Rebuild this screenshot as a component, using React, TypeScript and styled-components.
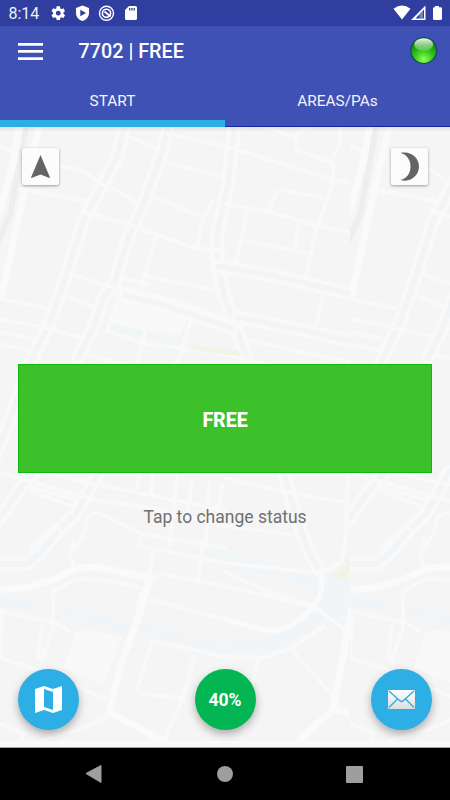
import React from "react";
import styled, { createGlobalStyle } from "styled-components";

const GlobalStyle = createGlobalStyle`
  * { box-sizing: border-box; }
  body { margin: 0; font-family: Roboto, "Noto Sans", sans-serif; background: #fafafa; }
  button { font: inherit; border: 0; padding: 0; margin: 0; color: inherit; }
  svg { display: block; }
`;

const Screen = styled.div`
  width: 450px;
  height: 800px;
  display: flex;
  flex-direction: column;
  overflow: hidden;
  background: #fafafa;
`;

const StatusBar = styled.div`
  height: 26px;
  flex: none;
  display: flex;
  align-items: center;
  justify-content: space-between;
  background: #303f9f;
  color: #fff;
`;

const Clock = styled.span`
  width: 42px;
  padding-left: 8.5px;
  font-size: 16px;
  line-height: 26px;
  padding-top: 1px;
  color: #eef0fa;
`;

const StatusGroup = styled.div`
  display: flex;
  align-items: center;
`;

const AppBar = styled.header`
  height: 50px;
  flex: none;
  display: flex;
  align-items: center;
  padding: 0 12px 0 18px;
  background: #3f51b5;
  color: #fff;
`;

const MenuButton = styled.button`
  width: 25px;
  height: 17px;
  background: none;
`;

const Title = styled.h1`
  flex: 1;
  margin: 0 0 0 35.5px;
  padding-top: 2px;
  font-size: 19.8px;
  font-weight: 500;
  line-height: 48px;
`;

const TabRow = styled.nav`
  height: 51px;
  flex: none;
  display: grid;
  grid-template-columns: 1fr 1fr;
  background: #3f51b5;
`;

const Tab = styled.button<{ $active?: boolean }>`
  background: none;
  color: #f3f4fb;
  font-size: 15.4px;
  line-height: 49px;
  display: block;
  height: 51px;
  box-shadow: inset 0 ${(p) => (p.$active ? "-7px #2daee5" : "-1px #1526a5")};
`;

const MapArea = styled.main`
  position: relative;
  height: 620px;
  flex: none;
  display: flex;
  flex-direction: column;
  padding: 21px 18px 0;
  background: #fafafa;
`;

const MapCanvas = styled.svg`
  position: absolute;
  inset: 0;
`;

const ToolRow = styled.div`
  position: relative;
  display: flex;
  justify-content: space-between;
  padding: 0 4px;
`;

const ToolButton = styled.button`
  width: 37px;
  height: 37px;
  border-radius: 2px;
  background: #fcfcfc;
  box-shadow: 0 1px 3px rgba(0, 0, 0, 0.38);
`;

const StatusButton = styled.button`
  position: relative;
  height: 109px;
  width: 414px;
  margin-top: 179px;
  background: #3cc12a;
  box-shadow: inset 0 0 0 1px #0fb90b;
  color: #fff;
  font-size: 19.5px;
  font-weight: 800;
  padding-top: 3px;
`;

const Hint = styled.p`
  position: relative;
  margin: 32px 0 0;
  text-align: center;
  font-size: 17.5px;
  line-height: 24px;
  color: #707070;
`;

const ActionRow = styled.div`
  position: relative;
  display: flex;
  justify-content: space-between;
  margin-top: 140px;
`;

const RoundButton = styled.button<{ $color: string }>`
  width: 61px;
  height: 61px;
  border-radius: 50%;
  display: flex;
  align-items: center;
  justify-content: center;
  background: ${(p) => p.$color};
  color: #fff;
  font-size: 17.6px;
  font-weight: 700;
  box-shadow: 0 4px 8px rgba(0, 0, 0, 0.3);
`;

const NavBar = styled.footer`
  height: 53px;
  flex: none;
  display: flex;
  align-items: center;
  gap: 115px;
  padding-left: 85px;
  border-top: 1px solid #a2a2a2;
  background: #000;
`;

const canals = [
  "M126 120L117 158 97 195 83 222 63 285 50 322 33 358 7 427 -6 458",
  "M170 120L160 158 143 205 128 238 115 282 103 298 94 325 78 358",
  "M235 120L228 185 217 235 217 265 225 298 235 325 248 362 285 477 295 513 308 550 319 570",
  "M123 295L173 308 232 328",
  "M218 266L275 276 356 295",
  "M238 317L292 328 356 342",
  "M-6 526L18 492 40 465",
  "M36 550L75 515 99 472",
  "M-6 564L27 564 40 553 57 533",
  "M350 520L366 490 376 470",
];

const roads = [
  "M-4 144L16 153",
  "M130 137L158 149",
  "M60 166L81 170 98 182 119 192 135 202",
  "M20 189L44 193 85 201",
  "M84 212L130 225 155 234 194 248 225 251",
  "M168 134L225 146 333 180 350 183",
  "M168 163L220 176",
  "M154 197L204 218",
  "M213 200L203 219 197 246",
  "M156 235L141 287",
  "M75 275L107 286 124 288 180 302 225 319",
  "M120 277L148 285",
  "M146 276L216 290",
  "M69 297L94 307",
  "M-5 298L45 308",
  "M-5 318L38 326 80 337",
  "M-5 331L32 339",
  "M-5 343L28 350",
  "M121 292L107 331 147 344 225 354 280 368",
  "M147 326L137 363",
  "M190 321L181 356 173 366",
  "M88 355L125 365",
  "M256 124L295 137 297 150 333 163 333 183 315 234 306 277",
  "M295 137L305 128",
  "M341 124L339 146 333 157",
  "M269 209L276 193 282 190 322 197",
  "M225 204L274 213 310 224 356 234",
  "M247 212L236 263",
  "M241 240L306 253",
  "M299 224L295 248",
  "M237 312L292 323 356 337",
  "M323 296L317 323",
  "M246 340L352 363",
  "M-5 471L25 480 60 490 100 501 146 507 225 526 295 535",
  "M42 472L108 487 198 505 225 510",
  "M30 487L78 500",
  "M31 491L71 506",
  "M140 471L137 488M153 474L151 494M177 476L170 545M192 479L188 511M209 484L206 548M222 486L217 516",
  "M225 478L280 491 344 502",
  "M348 474L345 545 341 562 328 570",
  "M74 550L83 535 88 516 97 512 142 534 139 546 180 554 225 563 320 573",
  "M142 534L225 548",
  "M202 542L199 578",
  "M74 540L70 553 73 565",
  "M53 630L53 592 75 579 104 580 138 587",
  "M143 588L137 610M153 552L147 586",
  "M151 580L162 574 225 586 312 607",
  "M152 600L225 619 270 631 283 630",
  "M225 572L268 592 315 607",
  "M-4 610L56 623 68 630",
  "M2 614L0 655",
  "M42 627L38 656 42 660 51 633",
  "M-5 656L46 673 106 699",
  "M152 642L137 689 142 694 183 698",
  "M154 641L225 657 262 658 292 648 324 626",
  "M194 657L182 700 164 740",
  "M257 660L244 731",
  "M293 651L333 696",
  "M315 607L346 631",
  "M107 717L83 728 40 741",
  "M-5 722L24 733 22 741",
];

const broadRoads = [
  "M21 120L13 164 -5 226",
  "M41 120L28 174 12 248 2 294",
  "M-5 590L25 588 54 579 78 568 98 567 150 578 142 607 122 661 109 712 163 741",
  "M352 608L345 645 333 709 300 740",
  "M333 709L352 714",
];

function MapTile() {
  return (
    <g fill="none" strokeLinejoin="round" strokeLinecap="round">
      <path d="M27 120L19 167 10 215 -4 246" stroke="#eeeeee" strokeWidth="6" />
      <path d="M123 298L151 307 187 318 181 334 108 325Z" fill="#f9f9f9" />
      <path d="M76 632C94 628 107 634 122 637L103 684 64 668Z" fill="#f9f9f9" />
      <path d="M-5 596L50 604 131 621 154 626 225 643 270 635 306 613 318 582 350 577 350 609 340 637 323 622 300 638 271 651 225 656 180 645 120 632 72 616 -5 605Z" fill="#f1f5f8" />
      <path d="M225 554L318 579 315 588 225 565Z" fill="#f1f5f8" />
      <path d="M111 326L180 344M82 487L128 493 225 510M207 553L260 562" stroke="#f0f5f8" strokeWidth="5" />
      <path d="M330 572Q344 577 350 550V572Q341 588 327 571Z" fill="#f0f4e7" />
      {canals.map((d) => (
        <g key={d}>
          <path d={d} stroke="#f9f9f9" strokeWidth="14" />
          <path d={d} stroke="#f1f5f8" strokeWidth="5.5" />
        </g>
      ))}
      {roads.map((d) => (
        <path key={d} d={d} stroke="#f9f9f9" strokeWidth="4" />
      ))}
      {broadRoads.map((d) => (
        <path key={d} d={d} stroke="#fafafa" strokeWidth="7" />
      ))}
      <path d="M321 570C324 590 320 600 311 609C290 632 276 634 250 626L225 619" stroke="#fafafa" strokeWidth="5" />
      <path d="M190 349L194 345 238 351 241 356 219 354 190 350Z" fill="#f1f5e8" />
    </g>
  );
}

function CityMap() {
  return (
    <MapCanvas width="450" height="620" viewBox="0 127 450 620">
      <defs>
        <clipPath id="tile">
          <rect x="0" y="127" width="350" height="614" />
        </clipPath>
        <linearGradient id="barShade" x1="0" y1="0" x2="0" y2="1">
          <stop offset="0" stopColor="#000" stopOpacity=".08" />
          <stop offset="1" stopColor="#000" stopOpacity="0" />
        </linearGradient>
      </defs>
      <rect y="127" width="450" height="614" fill="#f5f5f5" />
      <g clipPath="url(#tile)">
        <MapTile />
      </g>
      <g transform="translate(350 0)">
        <g clipPath="url(#tile)">
          <MapTile />
        </g>
      </g>
      <rect y="127" width="450" height="5" fill="url(#barShade)" />
    </MapCanvas>
  );
}

function NotificationIcons() {
  return (
    <svg width="100" height="26" viewBox="42 0 100 26" fill="#fff">
      <g transform="translate(50 4.9) scale(.69)">
        <path d="M19.43 12.98c.04-.32.07-.64.07-.98s-.03-.66-.07-.98l2.11-1.65c.19-.15.24-.42.12-.64l-2-3.46c-.12-.22-.39-.3-.61-.22l-2.49 1c-.52-.4-1.08-.73-1.69-.98l-.38-2.65C14.46 2.18 14.25 2 14 2h-4c-.25 0-.46.18-.49.42l-.38 2.65c-.61.25-1.17.59-1.69.98l-2.49-1c-.23-.09-.49 0-.61.22l-2 3.46c-.13.22-.07.49.12.64l2.11 1.65c-.04.32-.07.65-.07.98s.03.66.07.98l-2.11 1.65c-.19.15-.24.42-.12.64l2 3.46c.12.22.39.3.61.22l2.49-1c.52.4 1.08.73 1.69.98l.38 2.65c.03.24.24.42.49.42h4c.25 0 .46-.18.49-.42l.38-2.65c.61-.25 1.17-.59 1.69-.98l2.49 1c.23.09.49 0 .61-.22l2-3.46c.12-.22.07-.49-.12-.64zM12 15.5A3.5 3.5 0 1 1 12 8.500a3.500 3.500 0 0 1 0 7Z" />
      </g>
      <path fillRule="evenodd" d="M82.500 5.500L89 8V13C89 17 86 20 82.500 21C79 20 76 17 76 13V8ZM80.300 9.700V16.300L86 13Z" />
      <g fill="none" stroke="#fff">
        <circle cx="106.500" cy="13.300" r="7" strokeWidth="1.400" />
        <circle cx="106.500" cy="13.300" r="4.100" strokeWidth="1.600" />
        <path d="M104.500 11.500L110.500 16.500" strokeWidth="1.900" />
      </g>
      <path fillRule="evenodd" d="M129 6H135.500Q137 6 137 7.500V18.500Q137 20 135.500 20H126.500Q125 20 125 18.500V10ZM129 8V10.500H130.300V8ZM131.300 8V10.500H132.600V8ZM133.600 8V10.500H134.900V8Z" />
    </svg>
  );
}

function SystemIcons() {
  return (
    <svg width="60" height="26" viewBox="390 0 60 26" fill="#fff">
      <path d="M393.500 8.700Q402 2.500 410.500 8.700L402 19.500Z" />
      <path fillRule="evenodd" d="M411 20L425.500 5.500V20ZM415.500 18.600H424V9.500Z" />
      <path d="M419.500 14.500L423 11V18H419.500Z" opacity=".35" />
      <path d="M435 6H439V7.300H440.500Q442 7.300 442 8.500V18.700Q442 20 440.500 20H434.300Q433 20 433 18.700V8.500Q433 7.300 434.300 7.300H435Z" />
    </svg>
  );
}

function ConnectionLight() {
  return (
    <svg width="28" height="28" viewBox="0 0 28 28">
      <defs>
        <radialGradient id="lamp" cx=".5" cy=".85" r=".75">
          <stop offset="0" stopColor="#90ff55" />
          <stop offset=".45" stopColor="#39c920" />
          <stop offset="1" stopColor="#047f08" />
        </radialGradient>
        <linearGradient id="gloss" x1="0" y1="0" x2="0" y2="1">
          <stop offset="0" stopColor="#fff" stopOpacity=".95" />
          <stop offset="1" stopColor="#d5f6cd" stopOpacity=".2" />
        </linearGradient>
      </defs>
      <circle cx="13.700" cy="13.500" r="13" fill="url(#lamp)" stroke="#164861" strokeWidth="1.200" />
      <ellipse cx="13.700" cy="7.500" rx="9.500" ry="6.300" fill="url(#gloss)" />
    </svg>
  );
}

export default function App() {
  return (
    <Screen>
      <GlobalStyle />
      <StatusBar>
        <StatusGroup>
          <Clock>8:14</Clock>
          <NotificationIcons />
        </StatusGroup>
        <SystemIcons />
      </StatusBar>
      <AppBar>
        <MenuButton aria-label="Menu">
          <svg width="25" height="17" viewBox="0 0 25 17" fill="#fff">
            <path d="M0 0H25V2.700H0ZM0 7.100H25V9.800H0ZM0 14.200H25V17H0Z" />
          </svg>
        </MenuButton>
        <Title>7702 | FREE</Title>
        <ConnectionLight />
      </AppBar>
      <TabRow>
        <Tab $active>START</Tab>
        <Tab>AREAS/PAs</Tab>
      </TabRow>
      <MapArea>
        <CityMap />
        <ToolRow>
          <ToolButton aria-label="Navigate">
            <svg width="37" height="37" viewBox="0 0 37 37">
              <path d="M18.500 7L28 29.500 27.500 30 18.500 26.500 9.500 30 9 29.500Z" fill="#646464" />
            </svg>
          </ToolButton>
          <ToolButton aria-label="Night mode">
            <svg width="37" height="37" viewBox="0 0 37 37">
              <path d="M9.500 5C20 2.500 28 10 28 18.500S20 35 9.500 32C16 30.500 19.500 25 19.500 18.500S16 6.500 9.500 5Z" fill="#646464" />
            </svg>
          </ToolButton>
        </ToolRow>
        <StatusButton>FREE</StatusButton>
        <Hint>Tap to change status</Hint>
        <ActionRow>
          <RoundButton $color="#2daee5" aria-label="Map">
            <svg width="27" height="27" viewBox="0 0 27 27">
              <path fillRule="evenodd" d="M0 3L9 0 18 3 27 0V24L18 27 9 24 0 27ZM9 3V21L18 24V6Z" fill="#fff" />
            </svg>
          </RoundButton>
          <RoundButton $color="#04b553">40%</RoundButton>
          <RoundButton $color="#2daee5" aria-label="Messages">
            <svg width="27" height="19" viewBox="0 0 27 19">
              <defs>
                <linearGradient id="paper" x1="0" y1="0" x2="0" y2="1">
                  <stop offset="0" stopColor="#fff" />
                  <stop offset="1" stopColor="#dedede" />
                </linearGradient>
              </defs>
              <rect width="27" height="19" rx="1" fill="url(#paper)" />
              <path d="M1 1L11.500 10.500Q13.500 12.500 15.500 10.500L26 1M1 17.500L9.500 9M26 17.500L17.500 9" fill="none" stroke="#2daee5" strokeWidth="1.400" />
            </svg>
          </RoundButton>
        </ActionRow>
      </MapArea>
      <NavBar>
        <svg width="17" height="18" viewBox="0 0 17 18">
          <path d="M1 8.500L16 .5V17.500Z" fill="#9e9e9e" stroke="#9e9e9e" strokeLinejoin="round" />
        </svg>
        <svg width="16" height="16" viewBox="0 0 16 16">
          <circle cx="8" cy="8" r="8" fill="#9e9e9e" />
        </svg>
        <svg width="17" height="17" viewBox="2 0 17 17" overflow="visible">
          <rect width="17" height="17" rx="1" fill="#9e9e9e" />
        </svg>
      </NavBar>
    </Screen>
  );
}
